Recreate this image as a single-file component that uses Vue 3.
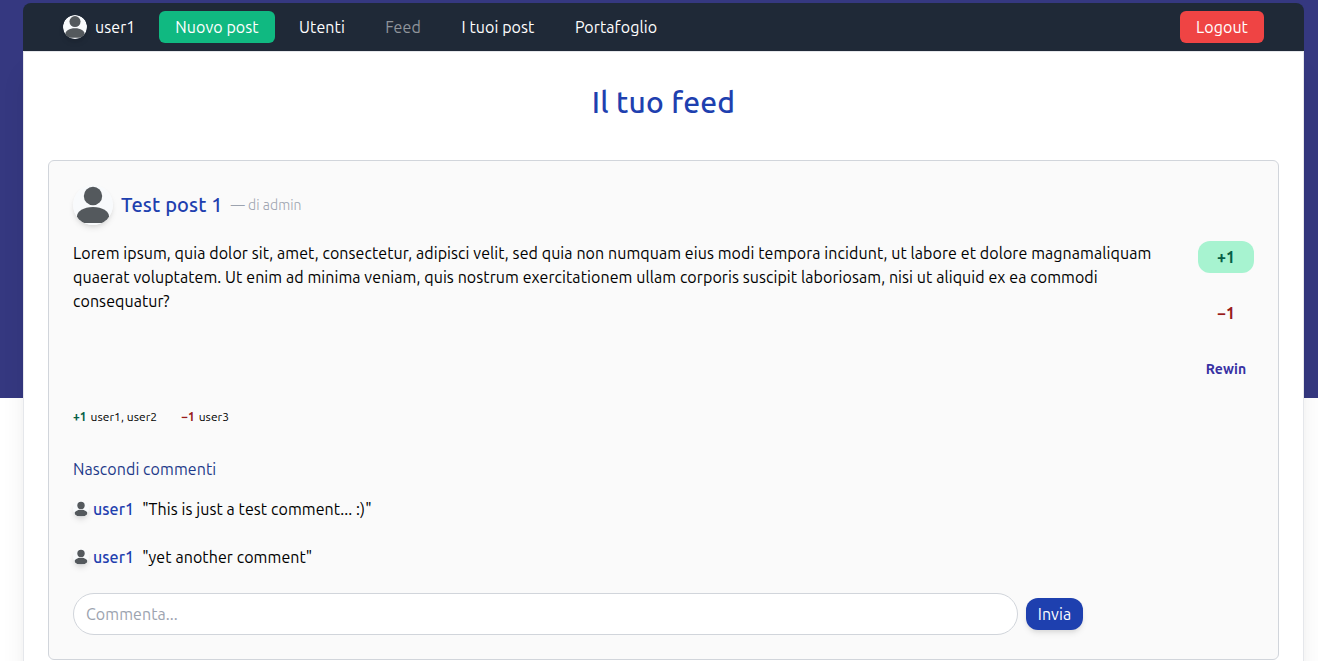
<script setup>
import { ref, h } from 'vue'

const Avatar = () =>
  h('svg', { viewBox: '0 0 40 40', 'aria-hidden': 'true' }, [
    h('circle', { cx: 20, cy: 20, r: 20, fill: '#f8fafc' }),
    h('circle', { cx: 20, cy: 11, r: 9.2, fill: '#54595d' }),
    h('path', {
      d: 'M20 22C29.5 22 36 26.5 36 31.2C36 34.2 33.2 36.8 29.8 38H10.2C6.8 36.8 4 34.2 4 31.2C4 26.5 10.5 22 20 22Z',
      fill: '#54595d',
    }),
  ])

const links = [
  { label: 'Utenti', cls: 'users' },
  { label: 'Feed', cls: 'feed' },
  { label: 'I tuoi post', cls: 'posts' },
  { label: 'Portafoglio', cls: 'wallet' },
]

const lines = [
  'Lorem ipsum, quia dolor sit, amet, consectetur, adipisci velit, sed quia non numquam eius modi tempora incidunt, ut labore et dolore magnamaliquam',
  'quaerat voluptatem. Ut enim ad minima veniam, quis nostrum exercitationem ullam corporis suscipit laboriosam, nisi ut aliquid ex ea commodi',
  'consequatur?',
]

const comments = [
  { id: 1, user: 'user1', text: 'This is just a test comment... :)' },
  { id: 2, user: 'user1', text: 'yet another comment' },
]

const draft = ref('')
</script>

<template>
  <div class="page">
    <nav class="nav">
      <div class="me"><Avatar class="avatar avatar-nav" /><span>user1</span></div>
      <button class="btn new-post">Nuovo post</button>
      <a v-for="l in links" :key="l.cls" class="link" :class="l.cls">{{ l.label }}</a>
      <button class="btn logout">Logout</button>
    </nav>
    <main class="main">
      <h1>Il tuo feed</h1>
      <article class="card">
        <header class="head">
          <Avatar class="avatar avatar-post" />
          <h2>Test post 1</h2>
          <span class="by">— di admin</span>
        </header>
        <div class="body">
          <p class="text"><span v-for="line in lines" :key="line" class="line">{{ line }}</span></p>
          <div class="actions">
            <button class="vote up active">+1</button>
            <button class="vote down">−1</button>
            <button class="vote rewin">Rewin</button>
          </div>
        </div>
        <div class="votes">
          <span><b class="up">+1</b> user1, user2</span>
          <span><b class="down">−1</b> user3</span>
        </div>
        <a class="toggle">Nascondi commenti</a>
        <div v-for="c in comments" :key="c.id" class="comment">
          <Avatar class="avatar avatar-comment" />
          <b class="author">{{ c.user }}</b>
          <span>"{{ c.text }}"</span>
        </div>
        <form class="form" @submit.prevent>
          <input v-model="draft" placeholder="Commenta..." />
          <button class="send">Invia</button>
        </form>
      </article>
    </main>
  </div>
</template>

<style>
body {
  background: #fff linear-gradient(#353880, #353880) no-repeat 0 0 / 100% 398px;
  overflow: hidden;
}
</style>

<style scoped>
* {
  box-sizing: border-box;
}
.page {
  height: 661px;
  padding: 3px 14px 0 23px;
  overflow: hidden;
  font: 16px/24px Ubuntu, "Noto Sans", sans-serif;
  letter-spacing: 0.077px;
  color: #000;
}
button,
input {
  font: inherit;
  letter-spacing: inherit;
  border: 0;
  margin: 0;
  padding: 0;
}
.nav {
  position: relative;
  display: flex;
  align-items: center;
  height: 48px;
  padding: 0 40px;
  border-radius: 8px 8px 0 0;
  background: #1f2937;
  color: #fff;
}
.avatar {
  flex: none;
  border-radius: 50%;
  box-shadow: 0 4px 6px -1px rgba(0, 0, 0, 0.1), 0 2px 4px -1px rgba(0, 0, 0, 0.06);
}
.avatar-nav {
  width: 24px;
  height: 24px;
}
.me {
  display: flex;
  align-items: center;
  gap: 8px;
  width: 96px;
}
.btn {
  height: 32px;
  border-radius: 6px;
  color: #fff;
}
.new-post {
  width: 116px;
  background: #10b981;
}
.link {
  margin-left: 8px;
  text-align: center;
}
.users {
  width: 78px;
}
.feed {
  width: 68px;
  color: #8f949b;
}
.posts {
  width: 106px;
}
.wallet {
  width: 114px;
}
.logout {
  width: 84px;
  margin-left: auto;
  background: #ef4444;
}
.main {
  height: 900px;
  padding: 32px 24px;
  border: 1px solid #e5e7eb;
  background: #fff;
  box-shadow: 0 20px 25px -5px rgba(0, 0, 0, 0.1), 0 10px 10px -5px rgba(0, 0, 0, 0.04);
}
h1 {
  margin: 0 0 40px;
  font-size: 30px;
  line-height: 36px;
  font-weight: 500;
  letter-spacing: 0.22px;
  text-align: center;
  color: #1e40af;
}
.card {
  height: 500px;
  padding: 24px;
  border: 1px solid #d1d5db;
  border-radius: 6px;
  background: #fafafa;
}
.head {
  display: flex;
  align-items: center;
  height: 40px;
}
.avatar-post {
  width: 40px;
  height: 40px;
}
h2 {
  margin: 0 8px;
  font-size: 20px;
  line-height: 28px;
  font-weight: 500;
  letter-spacing: 0.13px;
  color: #1e40af;
}
.by {
  font-size: 14px;
  font-weight: 300;
  color: #9ca3af;
}
.body {
  display: flex;
  justify-content: space-between;
  margin-top: 16px;
}
.text {
  margin: 0;
}
.line {
  display: block;
  white-space: nowrap;
}
.actions {
  display: flex;
  flex-direction: column;
  gap: 24px;
  width: 56px;
}
.vote {
  height: 32px;
  border-radius: 12px;
  background: transparent;
  font-weight: 700;
}
.up {
  color: #065f46;
}
.down {
  color: #991b1b;
}
.active {
  background: #a7f3d0;
}
.rewin {
  font-size: 14px;
  color: #3730a3;
}
.votes {
  display: flex;
  gap: 24px;
  margin-top: 24px;
  height: 16px;
  font-size: 12px;
  line-height: 16px;
}
.votes b {
  margin-right: 1px;
}
.toggle {
  display: block;
  margin-top: 32px;
  color: #1e3a8a;
}
.comment {
  display: flex;
  align-items: center;
  height: 24px;
  margin-top: 24px;
}
.toggle + .comment {
  margin-top: 16px;
}
.avatar-comment {
  width: 16px;
  height: 16px;
}
.author {
  margin: 0 8px 0 4px;
  font-weight: 500;
  color: #1e40af;
}
.form {
  display: flex;
  align-items: center;
  gap: 8px;
  margin-top: 24px;
}
input {
  width: 945px;
  height: 42px;
  padding: 0 12px;
  border: 1px solid #d1d5db;
  border-radius: 21px;
  background: #fff;
}
input::placeholder {
  color: #9ca3af;
  opacity: 1;
}
.send {
  width: 57px;
  height: 32px;
  border-radius: 12px;
  background: #1e40af;
  color: #fff;
  box-shadow: 0 4px 6px -1px rgba(0, 0, 0, 0.1), 0 2px 4px -1px rgba(0, 0, 0, 0.06);
}
</style>
